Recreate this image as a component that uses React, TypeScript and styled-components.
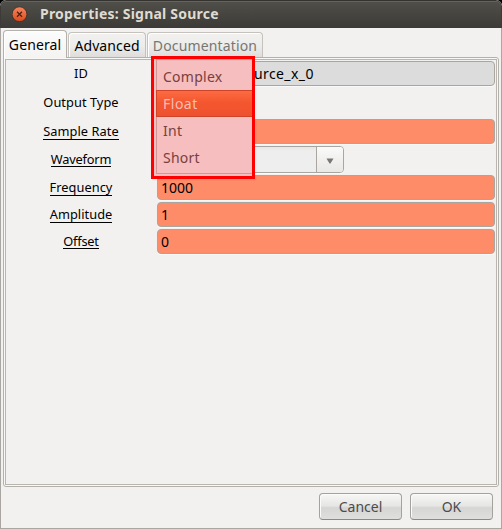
import React from 'react';
import styled, { createGlobalStyle } from 'styled-components';

const GlobalStyle = createGlobalStyle`
  * { box-sizing: border-box; }
  body { margin: 0; background: #000; }
`;

const Window = styled.div`
  width: 502px;
  height: 529px;
  display: flex;
  flex-direction: column;
  overflow: hidden;
  background: #f2f1f0;
  border-radius: 6px 6px 0 0;
  font-family: 'Noto Sans', 'Open Sans', sans-serif;
  font-size: 14px;
  color: #000;
`;

const TitleBar = styled.header`
  flex: none;
  height: 28px;
  display: flex;
  align-items: center;
  gap: 12px;
  padding-left: 11px;
  border: 1px solid #3c3b37;
  border-top: 1px solid #34332f;
  border-radius: 6px 6px 0 0;
  box-shadow: inset 0 1px #65635c;
  background: linear-gradient(#504f49, #3c3b37);
`;

const CloseButton = styled.button`
  flex: none;
  width: 16px;
  height: 16px;
  padding: 0;
  border: 0;
  background: none;
  svg { display: block; }
`;

const Title = styled.h1`
  margin: 0;
  font-size: 14px;
  line-height: 20px;
  font-weight: 700;
  letter-spacing: 0.22px;
  color: #dfdbd2;
  white-space: nowrap;
`;

const Body = styled.main`
  flex: 1;
  min-height: 0;
  display: flex;
  flex-direction: column;
  padding: 2px 2px 0;
  border: 1px solid #aaa7a2;
  border-top: 0;
`;

const Tabs = styled.nav`
  flex: none;
  height: 28px;
  display: flex;
  align-items: flex-end;
  gap: 1px;
  position: relative;
  z-index: 1;
`;

const Tab = styled.div<{ $width: number; $active?: boolean; $muted?: boolean; $spacing: number }>`
  width: ${p => p.$width}px;
  height: ${p => (p.$active ? 28 : 25)}px;
  margin-bottom: ${p => (p.$active ? 0 : 1)}px;
  display: flex;
  align-items: center;
  justify-content: center;
  padding-bottom: ${p => (p.$active ? 1 : 0)}px;
  border: 1px solid ${p => (p.$active ? '#b4b1ab' : '#c5c2bd')};
  border-bottom: 0;
  border-radius: 4px 4px 0 0;
  background: ${p => (p.$active ? 'linear-gradient(#fcfcfc, #f4f3f2)' : 'linear-gradient(#f2f1f0, #ececeb 55%, #dedddc)')};
  box-shadow: inset 1px 1px #fff;
  color: ${p => (p.$muted ? '#777672' : '#000')};
  letter-spacing: ${p => p.$spacing}px;
  white-space: nowrap;
`;

const Notebook = styled.section`
  position: relative;
  width: 496px;
  height: 430px;
  margin-top: -1px;
  padding: 1px;
  border: 1px solid #b4b1ab;
  border-radius: 0 3px 3px 3px;
  background: #f8f8f7;
`;

const Page = styled.div`
  height: 100%;
  padding: 1px 0 0;
  border: 1px solid #b9b6b0;
  background: #f2f1f0;
`;

const Form = styled.div`
  display: grid;
  grid-template-columns: 151px 338px;
  grid-template-rows: 25px 29px 25px 27px 25px 25px 25px;
  row-gap: 2px;
`;

const LabelCell = styled.div`
  display: flex;
  align-items: center;
  justify-content: center;
  padding-right: 1px;
`;

const Label = styled.span<{ $underlined?: boolean; $gap?: number; $spacing?: number }>`
  height: ${p => 15 + (p.$gap ?? 0)}px;
  margin-bottom: ${p => -(p.$gap ?? 0)}px;
  font-size: 12.8px;
  line-height: 15px;
  letter-spacing: ${p => p.$spacing ?? 0.05}px;
  border-bottom: ${p => (p.$underlined ? '1px solid #000' : '0')};
  white-space: nowrap;
`;

const Field = styled.div<{ $readonly?: boolean }>`
  display: flex;
  align-items: center;
  padding: 0 3px;
  border: 1px solid #aaa69f;
  border-radius: 4px;
  background: ${p => (p.$readonly ? '#dcdcdc' : '#ff8c69')};
  box-shadow: 0 1px #fafafa;
  white-space: nowrap;
`;

const FieldText = styled.span<{ $indent?: number; $spacing?: number }>`
  margin-left: ${p => p.$indent ?? 0}px;
  letter-spacing: ${p => p.$spacing ?? 0}px;
`;

const Combo = styled.div`
  width: 187px;
  display: flex;
  border: 1px solid #aaa69f;
  border-radius: 4px;
  background: linear-gradient(#e6e6e6, #eee 4px);
  box-shadow: 0 1px #fafafa;
`;

const ComboArrow = styled.div`
  width: 27px;
  margin-left: auto;
  display: flex;
  align-items: center;
  justify-content: center;
  padding-top: 2px;
  border-left: 1px solid #aaa69f;
  border-radius: 0 3px 3px 0;
  background: linear-gradient(#fafafa, #f2f1f0 45%, #e8e8e7);
`;

const Highlight = styled.div`
  position: absolute;
  z-index: 2;
  left: 147px;
  top: -2px;
  width: 104px;
  height: 123px;
  padding: 0 0 2px 2px;
  border: 3px solid #fe0000;
  background: #f6bebe;
`;

const Menu = styled.div`
  height: 115px;
  padding-top: 3px;
  border: 1px solid #cf9896;
  border-right: 0;
`;

const MenuItem = styled.div<{ $selected?: boolean; $spacing?: number }>`
  height: 27px;
  margin-left: -1px;
  padding-left: ${p => (p.$selected ? 6 : 7)}px;
  line-height: ${p => (p.$selected ? 25 : 27)}px;
  border: ${p => (p.$selected ? '1px solid #cf4427' : '0')};
  border-right: 0;
  background: ${p => (p.$selected ? 'linear-gradient(#fc6b43, #f4572f 45%, #ee512e)' : 'none')};
  color: ${p => (p.$selected ? '#f9bdb5' : '#794040')};
  letter-spacing: ${p => p.$spacing ?? 0.25}px;
`;

const Actions = styled.footer`
  display: flex;
  justify-content: flex-end;
  gap: 8px;
  padding: 6px 6px 0 0;
`;

const Button = styled.button`
  width: 83px;
  height: 27px;
  padding: 0 0 1px;
  border: 1px solid #a4a29f;
  border-bottom-color: #8b8986;
  border-radius: 4px;
  background: linear-gradient(#f7f7f6, #e5e5e4 48%, #d5d5d4 55%, #dfdfde);
  box-shadow: inset 1px 1px #fbfbfb;
  color: #4c4c4c;
  font: 14px 'Noto Sans', sans-serif;
`;

const labels = [
  { text: 'ID' },
  { text: 'Output Type' },
  { text: 'Sample Rate', underlined: true, gap: 1 },
  { text: 'Waveform', underlined: true, spacing: -0.2 },
  { text: 'Frequency', underlined: true, gap: 1 },
  { text: 'Amplitude', underlined: true, gap: 1 },
  { text: 'Offset', underlined: true, spacing: -0.2 },
];

const controls = [
  <Field key="id" $readonly><FieldText $indent={93} $spacing={0.4}>urce_x_0</FieldText></Field>,
  <div key="type" />,
  <Field key="rate" />,
  <Combo key="wave">
    <ComboArrow>
      <svg width="8" height="6" viewBox="0 0 8 6">
        <path d="M0.5 0.5H7.5L4.5 5.5H3.5Z" fill="#777" />
      </svg>
    </ComboArrow>
  </Combo>,
  <Field key="freq"><FieldText>1000</FieldText></Field>,
  <Field key="amp"><FieldText>1</FieldText></Field>,
  <Field key="offset"><FieldText>0</FieldText></Field>,
];

export default function App() {
  return (
    <>
      <GlobalStyle />
      <Window>
        <TitleBar>
          <CloseButton aria-label="Close">
            <svg width="16" height="16" viewBox="0 0 16 16">
              <defs>
                <linearGradient id="close" x1="0" y1="0" x2="0" y2="1">
                  <stop offset="0" stopColor="#f6865f" />
                  <stop offset="1" stopColor="#de4a1c" />
                </linearGradient>
              </defs>
              <circle cx="7.5" cy="8.2" r="7.4" fill="url(#close)" stroke="#333029" strokeWidth="0.8" />
              <path d="M5 5.7L10 10.7M10 5.7L5 10.7" stroke="#43241a" strokeWidth="1.3" />
            </svg>
          </CloseButton>
          <Title>Properties: Signal Source</Title>
        </TitleBar>
        <Body>
          <Tabs>
            <Tab $width={64} $active $spacing={0.1}>General</Tab>
            <Tab $width={78} $spacing={0.1}>Advanced</Tab>
            <Tab $width={116} $muted $spacing={0.15}>Documentation</Tab>
          </Tabs>
          <Notebook>
            <Page>
              <Form>
                {labels.map((l, i) => (
                  <React.Fragment key={l.text}>
                    <LabelCell>
                      <Label $underlined={l.underlined} $gap={l.gap} $spacing={l.spacing}>{l.text}</Label>
                    </LabelCell>
                    {controls[i]}
                  </React.Fragment>
                ))}
              </Form>
            </Page>
            <Highlight>
              <Menu>
                <MenuItem>Complex</MenuItem>
                <MenuItem $selected $spacing={0.5}>Float</MenuItem>
                <MenuItem>Int</MenuItem>
                <MenuItem>Short</MenuItem>
              </Menu>
            </Highlight>
          </Notebook>
          <Actions>
            <Button>Cancel</Button>
            <Button>OK</Button>
          </Actions>
        </Body>
      </Window>
    </>
  );
}
